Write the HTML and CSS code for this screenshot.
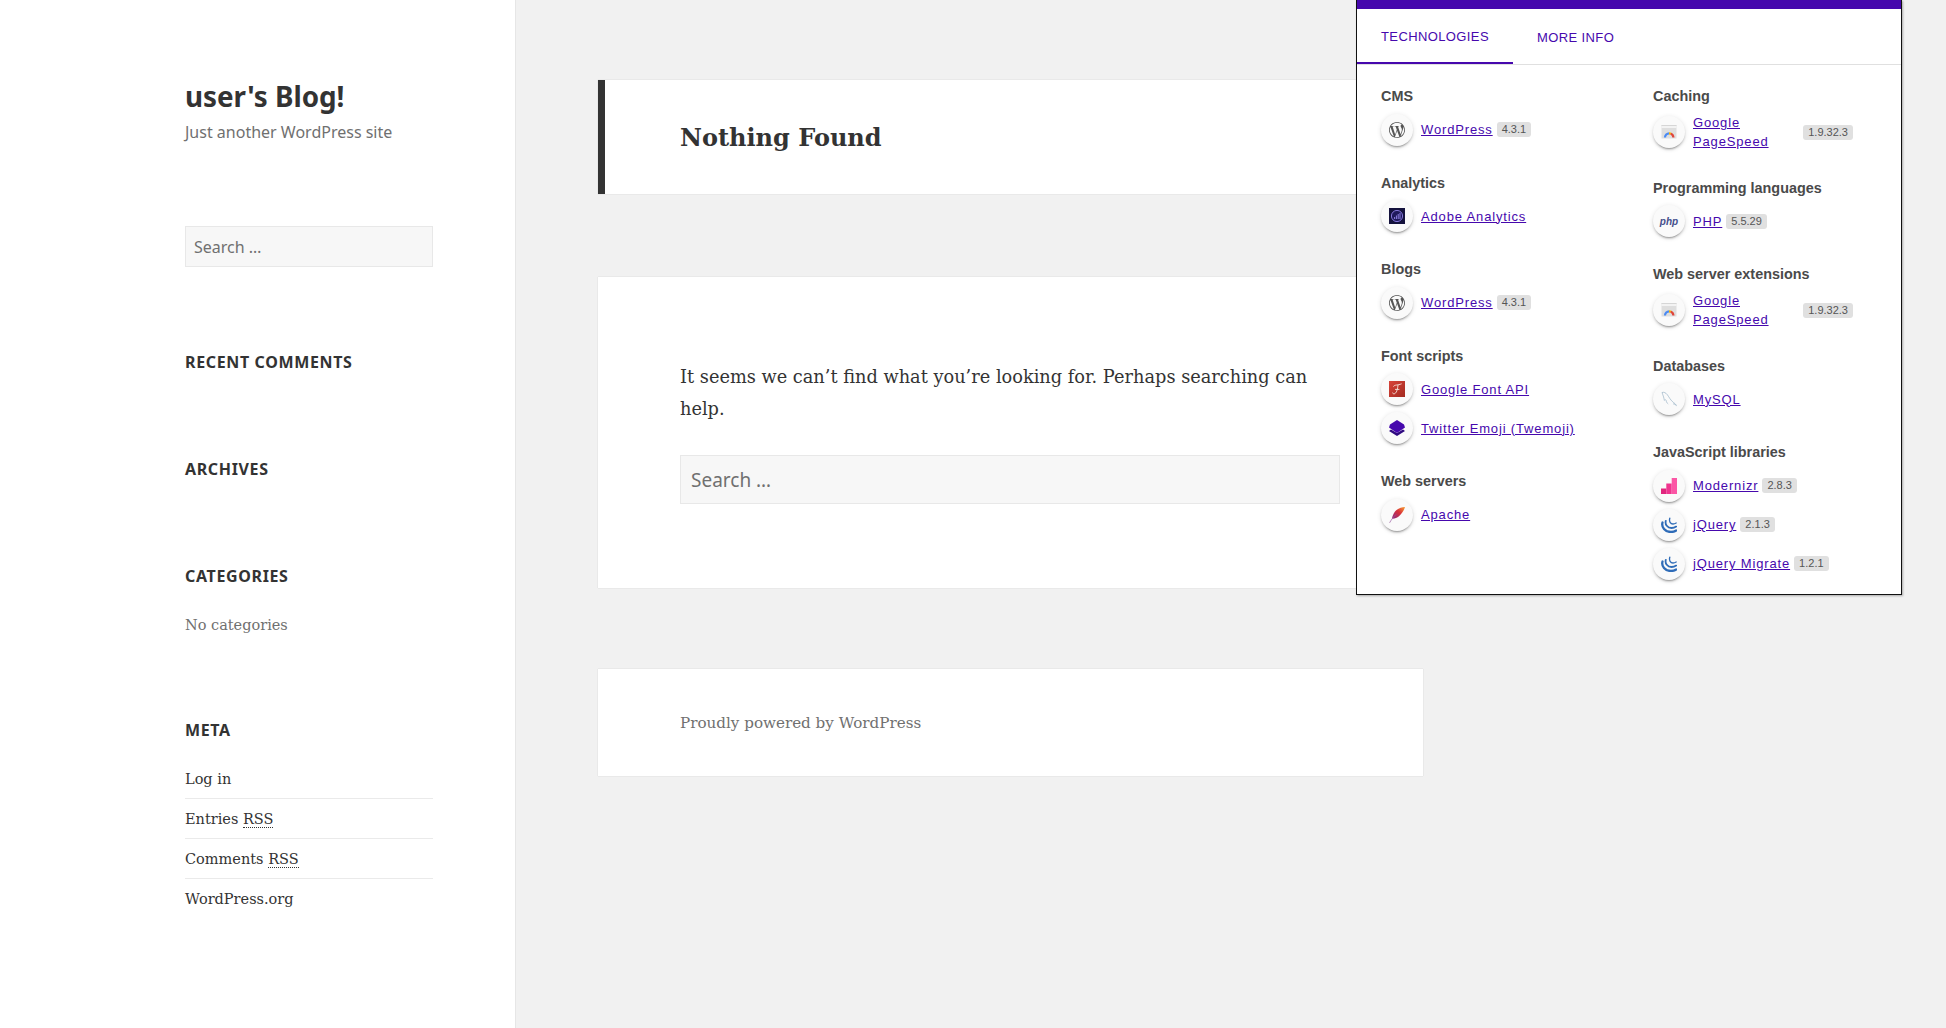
FILE: index.html
```html
<!DOCTYPE html>
<html lang="en">

<head>
  <meta charset="UTF-8">
  <title>user's Blog!</title>
  <link rel="stylesheet" href="styles.css">
</head>

<body>
  <aside class="sidebar">
    <div class="site-branding">
      <h1 class="site-title">user's Blog!</h1>
      <p class="site-description">Just another WordPress site</p>
    </div>

    <input class="search-field search-side" type="search" placeholder="Search …">

    <section class="widget widget-empty">
      <h2 class="widget-title">Recent Comments</h2>
    </section>
    <section class="widget widget-empty">
      <h2 class="widget-title">Archives</h2>
    </section>
    <section class="widget widget-categories">
      <h2 class="widget-title">Categories</h2>
      <p class="no-items">No categories</p>
    </section>
    <section class="widget">
      <h2 class="widget-title">Meta</h2>
      <ul class="meta-list">
        <li><a href="#">Log in</a></li>
        <li><a href="#">Entries <abbr title="Really Simple Syndication">RSS</abbr></a></li>
        <li><a href="#">Comments <abbr title="Really Simple Syndication">RSS</abbr></a></li>
        <li><a href="#">WordPress.org</a></li>
      </ul>
    </section>
  </aside>

  <main class="content">
    <header class="card page-header">
      <h1 class="page-title">Nothing Found</h1>
    </header>

    <div class="card page-body">
      <p>It seems we can’t find what you’re looking for. Perhaps searching can help.</p>
      <input class="search-field search-large" type="search" placeholder="Search …">
    </div>

    <footer class="card site-footer">
      <a href="#">Proudly powered by WordPress</a>
    </footer>
  </main>

  <div class="popup">
    <div class="popup-bar"></div>
    <div class="tabs">
      <a class="tab tab-active" href="#">Technologies</a>
      <a class="tab" href="#">More info</a>
    </div>

    <div class="tech-columns">
      <div class="tech-col">
        <section class="tech-group">
          <h3>CMS</h3>
          <div class="tech-row">
            <span class="tech-icon"><svg viewBox="0 0 24 24"><use href="#wp-logo"/></svg></span>
            <a href="#">WordPress</a><span class="version">4.3.1</span>
          </div>
        </section>
        <section class="tech-group">
          <h3>Analytics</h3>
          <div class="tech-row">
            <span class="tech-icon">
              <svg viewBox="0 0 16 16">
                <rect width="16" height="16" fill="#14123d"/>
                <circle cx="8" cy="8" r="5.6" fill="#1f1a5c" stroke="#8f7fe8" stroke-width=".9"/>
                <path d="M5.6 11V9M7.4 11V7.5M9.2 11V6M11 11V5" stroke="#9a8cf0" stroke-width=".9"/>
              </svg>
            </span>
            <a href="#">Adobe Analytics</a>
          </div>
        </section>
        <section class="tech-group">
          <h3>Blogs</h3>
          <div class="tech-row">
            <span class="tech-icon"><svg viewBox="0 0 24 24"><use href="#wp-logo"/></svg></span>
            <a href="#">WordPress</a><span class="version">4.3.1</span>
          </div>
        </section>
        <section class="tech-group">
          <h3>Font scripts</h3>
          <div class="tech-row">
            <span class="tech-icon">
              <svg viewBox="0 0 16 16">
                <defs>
                  <linearGradient id="font-red" x1="0" y1="0" x2="1" y2="1">
                    <stop offset="0" stop-color="#d8443a"/>
                    <stop offset="1" stop-color="#a32a20"/>
                  </linearGradient>
                </defs>
                <rect width="16" height="16" fill="url(#font-red)"/>
                <path d="M4.600 5.600C4.800 3.600 9 4.400 12.600 2.800M9 3.800C8.800 7 8 11 6.200 12.400 5.200 13.200 3.600 12.800 3.600 11.600M6 8.400h4.400" fill="none" stroke="#f6e4dc" stroke-width=".9"/>
              </svg>
            </span>
            <a href="#">Google Font API</a>
          </div>
          <div class="tech-row">
            <span class="tech-icon">
              <svg viewBox="0 0 16 16">
                <path d="M2 9.500 8 13 14 9.500 16 11 8 16 0 11Z" fill="#2f0a80"/>
                <path d="M8 0 15 4.500 16 7.500 8 13 0 7.500 1 4.500Z" fill="#4608ad"/>
              </svg>
            </span>
            <a href="#">Twitter Emoji (Twemoji)</a>
          </div>
        </section>
        <section class="tech-group">
          <h3>Web servers</h3>
          <div class="tech-row">
            <span class="tech-icon">
              <svg viewBox="0 0 16 16">
                <defs>
                  <linearGradient id="feather" x1="1" y1="0" x2="0" y2="1">
                    <stop offset="0" stop-color="#f7a030"/>
                    <stop offset=".45" stop-color="#d8303a"/>
                    <stop offset="1" stop-color="#8a2a80"/>
                  </linearGradient>
                </defs>
                <path d="M16 0C12.500 .2 8.500 1.400 5.800 4.800 4.200 7 3.400 9.400 3 11.600 5.400 11.800 8 11 10 9.200 13 6.600 15 3.400 16 0Z" fill="url(#feather)"/>
                <path d="M7 7.500C4.400 10 2.200 12.800 .6 15.800" fill="none" stroke="#9a5aa0" stroke-width=".7"/>
              </svg>
            </span>
            <a href="#">Apache</a>
          </div>
        </section>
      </div>

      <div class="tech-col">
        <section class="tech-group">
          <h3>Caching</h3>
          <div class="tech-row tech-row-wrapped">
            <span class="tech-icon"><svg viewBox="0 0 16 16"><use href="#pagespeed"/></svg></span>
            <a href="#">Google PageSpeed</a><span class="version">1.9.32.3</span>
          </div>
        </section>
        <section class="tech-group">
          <h3>Programming languages</h3>
          <div class="tech-row">
            <span class="tech-icon"><span class="php-mark">php</span></span>
            <a href="#">PHP</a><span class="version">5.5.29</span>
          </div>
        </section>
        <section class="tech-group">
          <h3>Web server extensions</h3>
          <div class="tech-row tech-row-wrapped">
            <span class="tech-icon"><svg viewBox="0 0 16 16"><use href="#pagespeed"/></svg></span>
            <a href="#">Google PageSpeed</a><span class="version">1.9.32.3</span>
          </div>
        </section>
        <section class="tech-group">
          <h3>Databases</h3>
          <div class="tech-row">
            <span class="tech-icon">
              <svg viewBox="0 0 16 16">
                <path d="M1 1.500C3 .8 4.800 1.800 6.400 3.800 8 6 9.800 9.600 12.400 11.400 13.400 12.200 14.600 12.800 15.400 14.600 14.400 13.400 13 13 12 12.800M1 1.500C1.800 3.800 2.800 6 3.400 9.400 4 8.400 4.600 8.400 5.200 9.600 5.400 11 6 12 7.200 13" fill="none" stroke="#8aa7bd" stroke-width=".6"/>
              </svg>
            </span>
            <a href="#">MySQL</a>
          </div>
        </section>
        <section class="tech-group">
          <h3>JavaScript libraries</h3>
          <div class="tech-row">
            <span class="tech-icon">
              <svg viewBox="0 0 16 16">
                <rect x="0" y="10.500" width="5.300" height="5.500" fill="#e0267e"/>
                <rect x="5.300" y="5.500" width="5.400" height="10.500" fill="#f0348f"/>
                <rect x="10.700" y="0" width="5.300" height="16" fill="#fb56a5"/>
              </svg>
            </span>
            <a href="#">Modernizr</a><span class="version">2.8.3</span>
          </div>
          <div class="tech-row">
            <span class="tech-icon"><svg viewBox="0 0 16 16"><use href="#jquery-logo"/></svg></span>
            <a href="#">jQuery</a><span class="version">2.1.3</span>
          </div>
          <div class="tech-row">
            <span class="tech-icon"><svg viewBox="0 0 16 16"><use href="#jquery-logo"/></svg></span>
            <a href="#">jQuery Migrate</a><span class="version">1.2.1</span>
          </div>
        </section>
      </div>
    </div>
  </div>

  <svg class="svg-defs" aria-hidden="true">
    <defs>
      <path id="wp-logo" fill="#555" d="M21.469 6.825c.84 1.537 1.318 3.3 1.318 5.175 0 3.979-2.156 7.456-5.363 9.325l3.295-9.527c.615-1.54.82-2.771.82-3.864 0-.405-.026-.78-.07-1.11m-7.981.105c.647-.03 1.232-.105 1.232-.105.582-.075.514-.93-.067-.899 0 0-1.755.135-2.88.135-1.064 0-2.85-.15-2.85-.15-.585-.03-.661.855-.075.885 0 0 .54.061 1.125.09l1.68 4.605-2.37 7.08L5.354 6.9c.649-.03 1.234-.1 1.234-.1.585-.075.516-.93-.065-.896 0 0-1.746.138-2.874.138-.2 0-.438-.008-.69-.015C4.911 3.15 8.235 1.215 12 1.215c2.809 0 5.365 1.072 7.286 2.833-.046-.003-.091-.009-.141-.009-1.06 0-1.812.923-1.812 1.914 0 .89.513 1.643 1.06 2.531.411.72.89 1.643.89 2.977 0 .915-.354 1.994-.821 3.479l-1.075 3.585-3.9-11.61.001.014zM12 22.784c-1.059 0-2.081-.153-3.048-.437l3.237-9.406 3.315 9.087c.024.053.05.101.078.149-1.12.393-2.325.609-3.582.609M1.211 12c0-1.564.336-3.05.935-4.39L7.29 21.709C3.694 19.96 1.212 16.271 1.211 12M12 0C5.385 0 0 5.385 0 12s5.385 12 12 12 12-5.385 12-12S18.615 0 12 0"/>
      <g id="pagespeed">
        <rect x=".5" y="1" width="15" height="13.500" fill="#dedede"/>
        <rect x=".5" y="1" width="15" height="3" fill="#f3f3f3"/>
        <rect x=".5" y="1" width="15" height=".7" fill="#c9c9c9"/>
        <path d="M4 13.500A4.200 4.200 0 0 1 8.200 9.300" fill="none" stroke="#4a8af4" stroke-width="2.200"/>
        <path d="M8 9.300A4.200 4.200 0 0 1 10 9.800" fill="none" stroke="#f6b400" stroke-width="2.200"/>
        <path d="M9.800 9.700A4.200 4.200 0 0 1 12.400 13.500" fill="none" stroke="#e0453a" stroke-width="2.200"/>
      </g>
      <g id="jquery-logo" fill="none" stroke="#2f6cb8" stroke-linecap="round">
        <path d="M1.500 5.500C.2 10 4 15 10 15 12.500 15 14 14.300 15.200 13.500" stroke-width="2.300"/>
        <path d="M4.800 3.800C3.800 7.500 6.500 11 10.500 11 12.500 11 14 10.400 15.200 9.600" stroke-width="1.800"/>
        <path d="M8.800 1.200C7.800 4.500 9.500 7 12 7 13.200 7 14.200 6.600 15.200 6" stroke-width="1.300"/>
      </g>
    </defs>
  </svg>
</body>

</html>
```

FILE: styles.css
```css
* {
  box-sizing: border-box;
}

html,
body {
  height: 100%;
}

body {
  margin: 0;
  display: flex;
  background: #f1f1f1;
  color: #333;
  font-family: "DejaVu Serif", serif;
  overflow: hidden;
}

a {
  color: inherit;
  text-decoration: none;
}

.svg-defs {
  display: none;
}

/* sidebar */
.sidebar {
  flex: 0 0 516px;
  min-height: 100%;
  padding: 76px 82px 0 185px;
  background: #fff;
  border-right: 1px solid #e6e6e6;
}

.site-title {
  margin: 0;
  font: bold 27.800px/40px "Noto Sans", sans-serif;
}

.site-description {
  margin: 4px 0 0;
  font: 16px/24px "Noto Sans", sans-serif;
  color: #707070;
}

.search-field {
  display: block;
  width: 100%;
  height: 41px;
  padding: 0 8px;
  background: #f7f7f7;
  border: 1px solid #e8e8e8;
  border-radius: 0;
  color: #333;
  font: 16px "Noto Sans", sans-serif;
  outline: none;
  appearance: none;
}

.search-field::placeholder {
  color: #707070;
  opacity: 1;
}

.search-side {
  margin: 82px 0 84px;
}

.widget-empty {
  height: 107px;
}

.widget-categories {
  height: 154px;
}

.widget-title {
  margin: 0;
  font: bold 16px/22px "Noto Sans", sans-serif;
  letter-spacing: .04em;
  text-transform: uppercase;
}

.no-items {
  margin: 26px 0 0;
  font-size: 14.500px;
  line-height: 24px;
  color: #707070;
}

.meta-list {
  list-style: none;
  margin: 18px 0 0;
  padding: 0;
  font-size: 14.500px;
  line-height: 24px;
}

.meta-list li {
  height: 40px;
  padding: 8px 0 7px;
  border-bottom: 1px solid #eaeaea;
}

.meta-list li:last-child {
  border-bottom: 0;
}

abbr {
  text-decoration: none;
  border-bottom: 1px dotted #333;
}

/* main column */
.content {
  flex: 0 0 907px;
  padding: 80px 0 0 82px;
}

.card {
  background: #fff;
  box-shadow: 0 0 1px rgba(0, 0, 0, 0.2);
}

.page-header {
  height: 114px;
  padding: 2px 0 0 75px;
  border-left: 7px solid #333;
  display: flex;
  align-items: center;
}

.page-title {
  margin: 0;
  font-size: 24px;
  line-height: 36px;
  font-weight: bold;
}

.page-body {
  margin-top: 83px;
  height: 311px;
  padding: 84px 83px 0 82px;
}

.page-body p {
  margin: 0;
  font-size: 17.750px;
  line-height: 32px;
}

.search-large {
  height: 49px;
  margin-top: 30px;
  padding: 0 10px;
  font-size: 19px;
}

.site-footer {
  margin-top: 81px;
  height: 107px;
  padding: 0 83px 0 82px;
  display: flex;
  align-items: center;
  font-size: 15.150px;
  color: #707070;
}

/* technology popup */
.popup {
  position: absolute;
  top: 0;
  left: 1356px;
  width: 546px;
  height: 595px;
  background: #fff;
  border: 1px solid #111;
  border-top: 0;
  box-shadow: 1px 1px 2px rgba(0, 0, 0, 0.3);
  font-family: "Liberation Sans", sans-serif;
}

.popup-bar {
  height: 9px;
  background: #4608ad;
}

.tabs {
  display: flex;
  height: 56px;
  border-bottom: 1px solid #e0e0e0;
}

.tab {
  padding: 2px 24px 0;
  display: flex;
  align-items: center;
  color: #4608ad;
  font-size: 13px;
  letter-spacing: .03em;
  text-transform: uppercase;
}

.tab-active {
  height: 55px;
  border-bottom: 2px solid #4608ad;
}

.tech-columns {
  display: grid;
  grid-template-columns: 200px 200px;
  gap: 72px;
  padding: 19px 0 0 24px;
}

.tech-group {
  margin-bottom: 24.500px;
}

.tech-group h3 {
  margin: 0 0 5px;
  font-size: 14.400px;
  line-height: 24px;
  color: #4a4a4a;
}

.tech-row {
  display: flex;
  align-items: center;
  min-height: 33px;
  margin-bottom: 6px;
  font-size: 13px;
  line-height: 19px;
  color: #4608ad;
}

.tech-row:last-child {
  margin-bottom: 0;
}

.tech-row-wrapped {
  margin-top: 2.500px;
}

.tech-row a {
  text-decoration: underline;
  letter-spacing: .065em;
}

.tech-icon {
  flex: 0 0 32px;
  height: 32px;
  margin-right: 8px;
  display: flex;
  align-items: center;
  justify-content: center;
  background: #fafafa;
  border-radius: 50%;
  box-shadow: 0 3px 1px -2px rgba(0, 0, 0, 0.2), 0 2px 2px 0 rgba(0, 0, 0, 0.14), 0 1px 5px 0 rgba(0, 0, 0, 0.12);
}

.tech-icon svg {
  width: 16px;
  height: 16px;
}

.php-mark {
  color: #454f8c;
  font-size: 10px;
  font-weight: bold;
  font-style: italic;
}

.version {
  flex: none;
  margin-left: 4px;
  padding: 0 5px;
  background: #e0e0e0;
  border-radius: 3px;
  color: #555;
  font-size: 11px;
  line-height: 15px;
}
```
